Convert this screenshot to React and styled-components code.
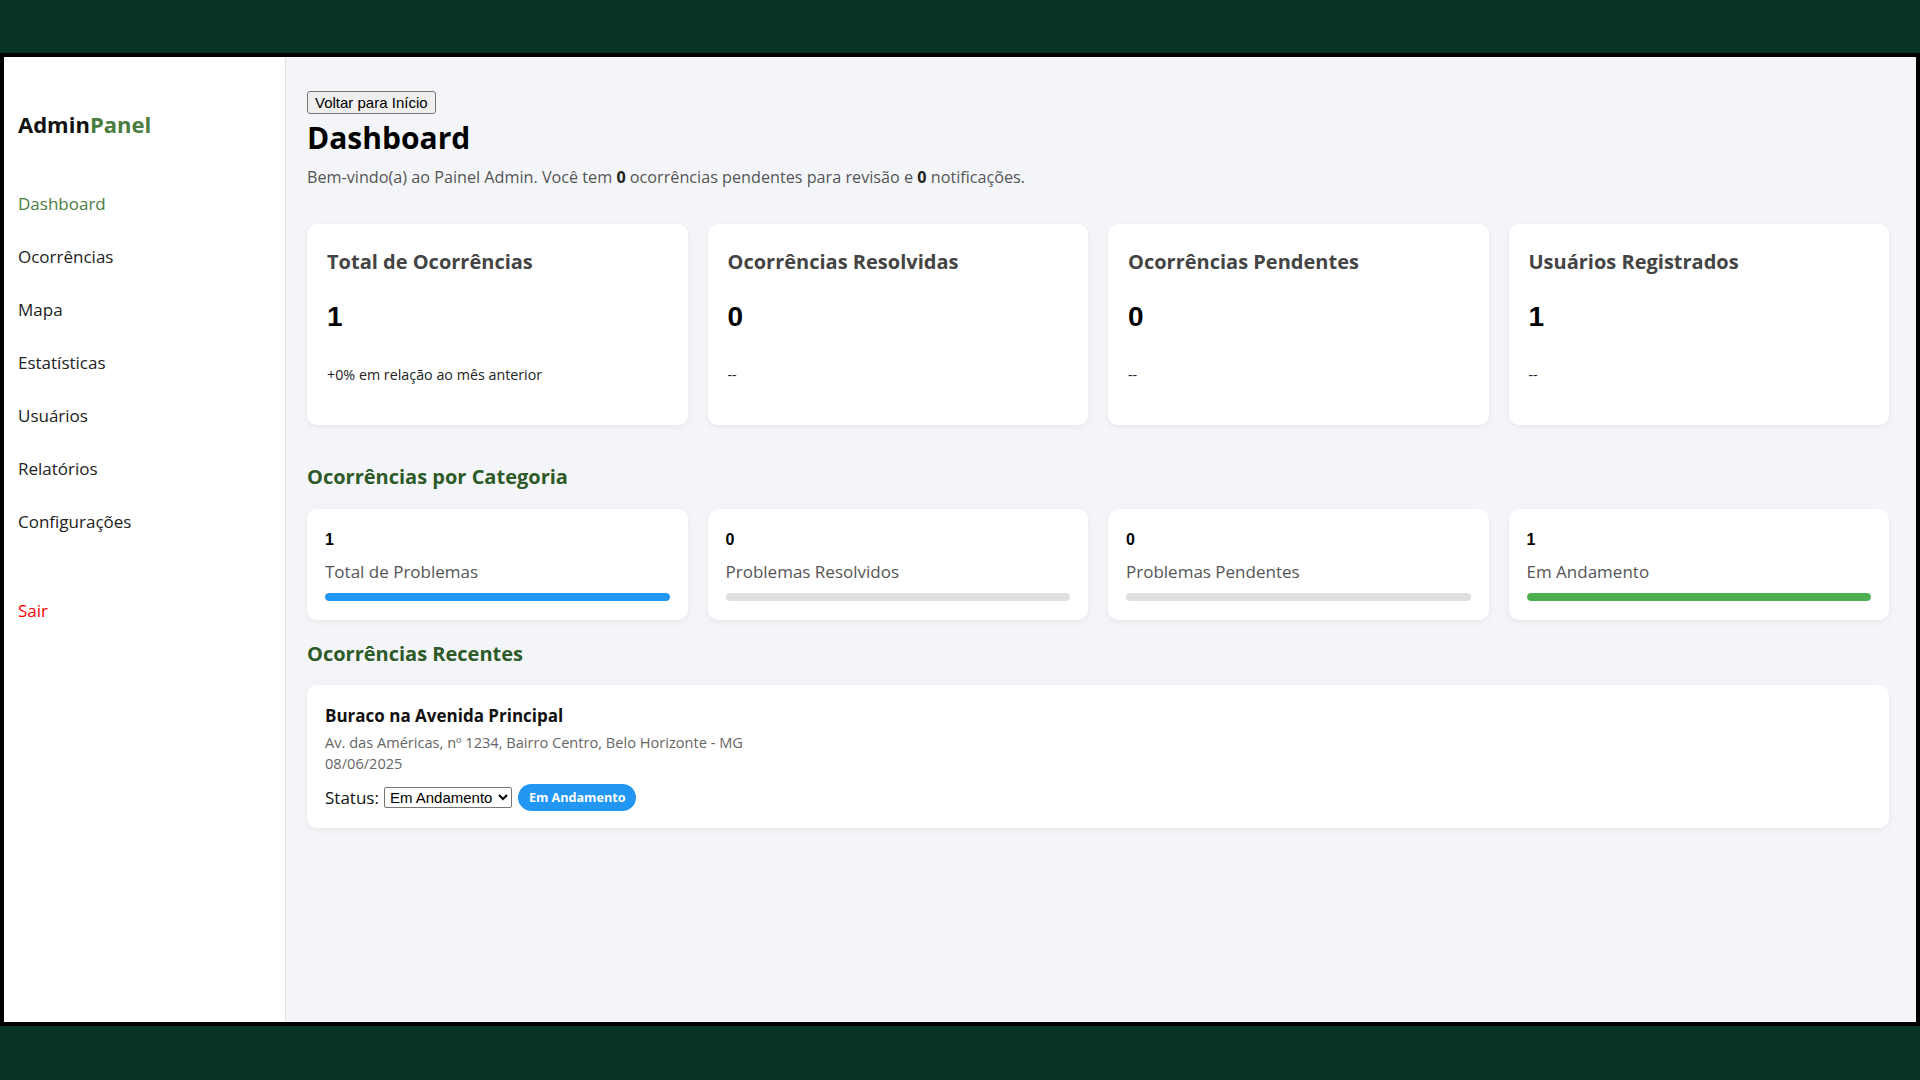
import React, { useState } from "react";
import styled, { createGlobalStyle } from "styled-components";

const GlobalStyle = createGlobalStyle`
  * { box-sizing: border-box; }
  body {
    margin: 0;
    background: #083327;
    font-family: "Open Sans", "Noto Sans", sans-serif;
  }
`;

const Frame = styled.div`
  height: 100vh;
  padding: 53px 0 54px;
`;

const Screen = styled.div`
  height: 100%;
  border: 4px solid #000;
  display: flex;
  background: #f4f5f9;
  overflow: hidden;
`;

const Sidebar = styled.aside`
  width: 282px;
  flex-shrink: 0;
  background: #fff;
  border-right: 1px solid #e2e2e2;
  padding: 52px 14px 0;
  display: flex;
  flex-direction: column;
`;

const Logo = styled.div`
  font-size: 22px;
  line-height: 30px;
  font-weight: 700;
  color: #111;

  span {
    color: #4a7c3f;
  }
`;

const Nav = styled.nav`
  margin-top: 38px;
  display: flex;
  flex-direction: column;
`;

const NavItem = styled.a`
  display: block;
  padding: 14px 0;
  font-size: 17px;
  line-height: 25px;
  font-weight: 500;
  color: ${p => (p.$danger ? "#ff0000" : p.$active ? "#4a7c3f" : "#222")};
  margin-top: ${p => (p.$danger ? "36px" : "0")};
  text-decoration: none;
  cursor: pointer;
`;

const Main = styled.main`
  flex: 1;
  padding: 34px 27px 0 21px;
  overflow: hidden;
`;

const BackButton = styled.button`
  display: block;
  font-family: "Liberation Sans", Arial, sans-serif;
  font-size: 15px;
  line-height: 17px;
  padding: 2px 7px;
  border: 1px solid #767676;
  border-radius: 3px;
  background: #efefef;
  color: #000;
  cursor: pointer;
`;

const Title = styled.h1`
  margin: 4px 0 0;
  font-size: 30px;
  line-height: 40px;
  font-weight: 700;
  color: #000;
`;

const Welcome = styled.p`
  margin: 8px 0 0;
  font-size: 16.2px;
  line-height: 22px;
  color: #555;

  b {
    color: #222;
  }
`;

const CardGrid = styled.div`
  display: grid;
  grid-template-columns: repeat(4, 1fr);
  gap: 20px;
  margin-top: ${p => p.$top || "0"};
`;

const Card = styled.div`
  background: #fff;
  border-radius: 10px;
  box-shadow: 0 2px 6px rgba(0, 0, 0, 0.06);
`;

const StatCard = styled(Card)`
  padding: 24px 20px 40px;
`;

const StatTitle = styled.h3`
  margin: 0;
  font-size: 20px;
  line-height: 28px;
  font-weight: 700;
  color: #444;
`;

const StatValue = styled.div`
  margin-top: 24px;
  font-family: "Liberation Sans", Arial, sans-serif;
  font-size: 28px;
  line-height: 34px;
  font-weight: 700;
  color: #000;
`;

const StatNote = styled.div`
  margin-top: 31px;
  font-size: 14.3px;
  line-height: 20px;
  color: #222;
`;

const SectionTitle = styled.h2`
  margin: ${p => p.$top} 0 0;
  font-size: 20px;
  line-height: 28px;
  font-weight: 700;
  color: #2d5a27;
`;

const CategoryCard = styled(Card)`
  padding: 21px 18px 19px;
`;

const CategoryCount = styled.div`
  font-family: "Liberation Sans", Arial, sans-serif;
  font-size: 16px;
  line-height: 20px;
  font-weight: 700;
  color: #000;
`;

const CategoryLabel = styled.div`
  margin-top: 10px;
  font-size: 17px;
  line-height: 24px;
  font-weight: 400;
  color: #555;
`;

const Track = styled.div`
  margin-top: 9px;
  height: 8px;
  border-radius: 4px;
  background: #e0e0e0;
  overflow: hidden;
`;

const Fill = styled.div`
  height: 100%;
  border-radius: 4px;
  background: ${p => p.$color};
`;

const RecentCard = styled(Card)`
  margin-top: 17px;
  padding: 20px 18px 17px;
`;

const RecentTitle = styled.div`
  font-size: 17px;
  line-height: 22px;
  font-weight: 700;
  color: #111;
`;

const RecentMeta = styled.div`
  margin-top: ${p => p.$top || "0"};
  font-size: 14.6px;
  line-height: 21px;
  color: #666;
`;

const StatusRow = styled.div`
  margin-top: 10px;
  display: flex;
  align-items: center;
  gap: 5px;
`;

const StatusLabel = styled.span`
  font-size: 17px;
  line-height: 24px;
  color: #111;
`;

const StatusSelect = styled.select`
  font-family: "Liberation Sans", Arial, sans-serif;
  font-size: 15px;
  height: 21px;
  padding: 0 1px;
  border: 1px solid #767676;
  border-radius: 2px;
  background: #fff;
  color: #000;
`;

const Badge = styled.span`
  margin-left: 1px;
  padding: 5px 11px;
  border-radius: 14px;
  background: #2196f3;
  color: #fff;
  font-size: 12.6px;
  line-height: 17px;
  font-weight: 700;
`;

const navItems = [
  "Dashboard",
  "Ocorrências",
  "Mapa",
  "Estatísticas",
  "Usuários",
  "Relatórios",
  "Configurações"
];

const stats = [
  { title: "Total de Ocorrências", value: 1, note: "+0% em relação ao mês anterior" },
  { title: "Ocorrências Resolvidas", value: 0, note: "--" },
  { title: "Ocorrências Pendentes", value: 0, note: "--" },
  { title: "Usuários Registrados", value: 1, note: "--" }
];

const categories = [
  { count: 1, label: "Total de Problemas", pct: 100, color: "#2196f3" },
  { count: 0, label: "Problemas Resolvidos", pct: 0, color: "#4caf50" },
  { count: 0, label: "Problemas Pendentes", pct: 0, color: "#ff9800" },
  { count: 1, label: "Em Andamento", pct: 100, color: "#4caf50" }
];

const App = () => {
  const [status, setStatus] = useState("Em Andamento");

  return (
    <>
      <GlobalStyle />
      <Frame>
        <Screen>
          <Sidebar>
            <Logo>
              Admin<span>Panel</span>
            </Logo>
            <Nav>
              {navItems.map((item, i) => (
                <NavItem key={item} $active={i === 0}>
                  {item}
                </NavItem>
              ))}
              <NavItem $danger>Sair</NavItem>
            </Nav>
          </Sidebar>

          <Main>
            <BackButton>Voltar para Início</BackButton>
            <Title>Dashboard</Title>
            <Welcome>
              Bem-vindo(a) ao Painel Admin. Você tem <b>0</b> ocorrências pendentes para
              revisão e <b>0</b> notificações.
            </Welcome>

            <CardGrid $top="36px">
              {stats.map(s => (
                <StatCard key={s.title}>
                  <StatTitle>{s.title}</StatTitle>
                  <StatValue>{s.value}</StatValue>
                  <StatNote>{s.note}</StatNote>
                </StatCard>
              ))}
            </CardGrid>

            <SectionTitle $top="38px">Ocorrências por Categoria</SectionTitle>
            <CardGrid $top="18px">
              {categories.map(c => (
                <CategoryCard key={c.label}>
                  <CategoryCount>{c.count}</CategoryCount>
                  <CategoryLabel>{c.label}</CategoryLabel>
                  <Track>
                    <Fill $color={c.color} style={{ width: `${c.pct}%` }} />
                  </Track>
                </CategoryCard>
              ))}
            </CardGrid>

            <SectionTitle $top="20px">Ocorrências Recentes</SectionTitle>
            <RecentCard>
              <RecentTitle>Buraco na Avenida Principal</RecentTitle>
              <RecentMeta $top="5px">
                Av. das Américas, nº 1234, Bairro Centro, Belo Horizonte - MG
              </RecentMeta>
              <RecentMeta>08/06/2025</RecentMeta>
              <StatusRow>
                <StatusLabel>Status:</StatusLabel>
                <StatusSelect value={status} onChange={e => setStatus(e.target.value)}>
                  <option>Pendente</option>
                  <option>Em Andamento</option>
                  <option>Resolvido</option>
                </StatusSelect>
                <Badge>{status}</Badge>
              </StatusRow>
            </RecentCard>
          </Main>
        </Screen>
      </Frame>
    </>
  );
};

export default App;
